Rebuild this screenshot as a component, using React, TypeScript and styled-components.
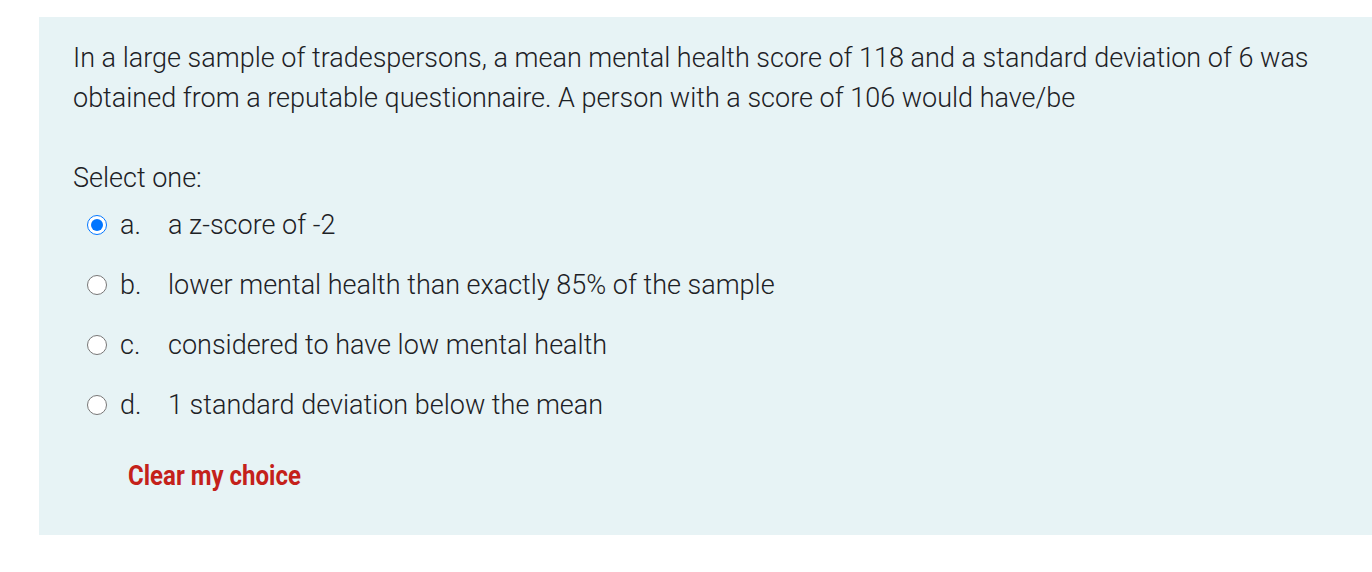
import React, { useState } from "react";
import styled, { createGlobalStyle } from "styled-components";

const GlobalStyle = createGlobalStyle`
  body {
    margin: 0;
    background: #fff;
    font-family: Roboto, "Liberation Sans", sans-serif;
  }
`;

const options = [
  { key: "a", text: "a z-score of -2" },
  { key: "b", text: "lower mental health than exactly 85% of the sample" },
  { key: "c", text: "considered to have low mental health" },
  { key: "d", text: "1 standard deviation below the mean" },
];

const App: React.FC = () => {
  const [choice, setChoice] = useState<string | null>("a");

  return (
    <Page>
      <GlobalStyle />
      <QuestionCard>
        <QuestionText>
          In a large sample of tradespersons, a mean mental health score of 118
          and a standard deviation of 6 was obtained from a reputable
          questionnaire. A person with a score of 106 would have/be
        </QuestionText>
        <Prompt>Select one:</Prompt>
        <OptionList>
          {options.map((o) => (
            <OptionRow key={o.key}>
              <Radio
                type="radio"
                name="answer"
                checked={choice === o.key}
                onChange={() => setChoice(o.key)}
              />
              <Letter>{o.key}.</Letter>
              <OptionText>{o.text}</OptionText>
            </OptionRow>
          ))}
        </OptionList>
        <ClearLink onClick={() => setChoice(null)}>Clear my choice</ClearLink>
      </QuestionCard>
    </Page>
  );
};

export default App;

const Page = styled.div`
  padding: 17px 0 0 39px;
`;

const QuestionCard = styled.div`
  background-color: #e7f3f5;
  padding: 21px 40px 39px 34px;
  color: #1d2125;
  font-weight: 300;
  font-size: 27px;
`;

const QuestionText = styled.div`
  line-height: 40px;
`;

const Prompt = styled.div`
  margin-top: 43px;
  line-height: 34px;
`;

const OptionList = styled.div`
  display: flex;
  flex-direction: column;
`;

const OptionRow = styled.label`
  display: flex;
  align-items: center;
  height: 60px;
  cursor: pointer;
`;

const Radio = styled.input`
  width: 20px;
  height: 20px;
  margin: 0 0 0 14px;
  cursor: pointer;
`;

const Letter = styled.span`
  width: 48px;
  margin-left: 13px;
`;

const OptionText = styled.span``;

const ClearLink = styled.a`
  display: inline-block;
  margin: 21px 0 0 55px;
  line-height: 40px;
  font-weight: 700;
  font-size: 27px;
  color: #c4211a;
  transform: scaleX(0.89);
  transform-origin: left center;
  cursor: pointer;
`;
